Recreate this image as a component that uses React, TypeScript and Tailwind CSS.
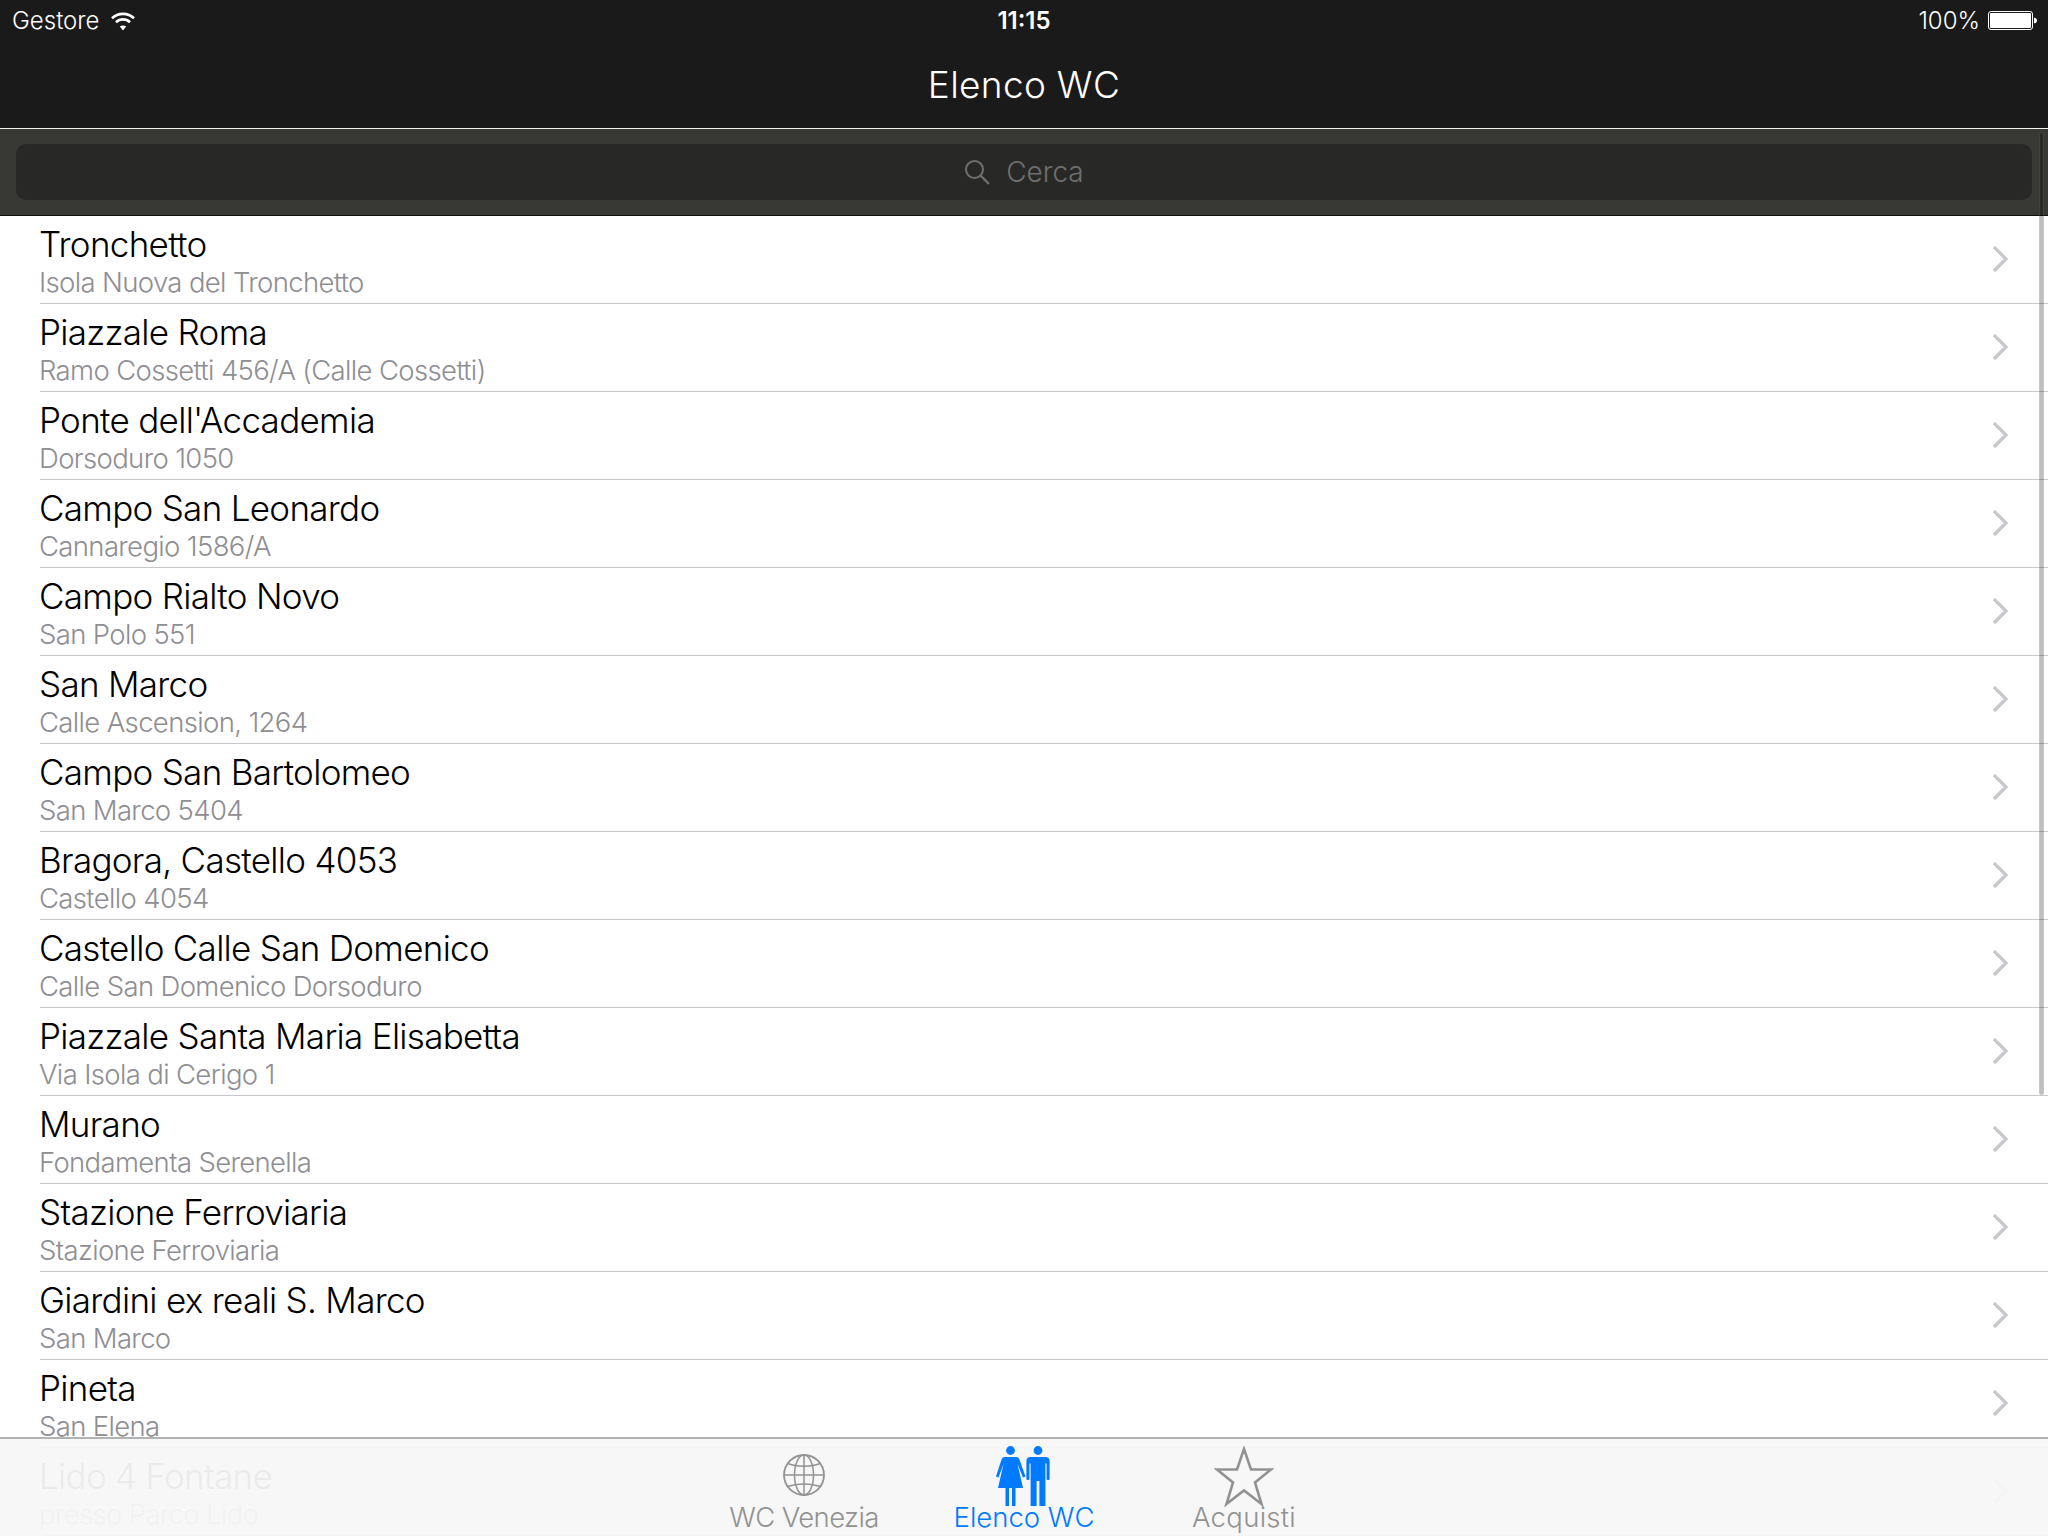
const rows: [string, string][] = [
  ["Tronchetto", "Isola Nuova del Tronchetto"],
  ["Piazzale Roma", "Ramo Cossetti 456/A (Calle Cossetti)"],
  ["Ponte dell'Accademia", "Dorsoduro 1050"],
  ["Campo San Leonardo", "Cannaregio 1586/A"],
  ["Campo Rialto Novo", "San Polo 551"],
  ["San Marco", "Calle Ascension, 1264"],
  ["Campo San Bartolomeo", "San Marco 5404"],
  ["Bragora, Castello 4053", "Castello 4054"],
  ["Castello Calle San Domenico", "Calle San Domenico Dorsoduro"],
  ["Piazzale Santa Maria Elisabetta", "Via Isola di Cerigo 1"],
  ["Murano", "Fondamenta Serenella"],
  ["Stazione Ferroviaria", "Stazione Ferroviaria"],
  ["Giardini ex reali S. Marco", "San Marco"],
  ["Pineta", "San Elena"],
  ["Lido 4 Fontane", "presso Parco Lido"],
];

function Wifi() {
  return (
    <svg width="26" height="20" viewBox="0 0 26 20" fill="none" stroke="white" strokeWidth="2.6">
      <path d="M2 7.2C8 1.4 18 1.4 24 7.2" />
      <path d="M6 11.2C10 7.4 16 7.4 20 11.2" />
      <path d="M13 19.4L9.8 15.6C11.8 14 14.2 14 16.2 15.6Z" fill="white" stroke="none" />
    </svg>
  );
}

function Battery() {
  return (
    <svg width="50" height="20" viewBox="0 0 50 20" fill="none">
      <rect x="0.5" y="0.5" width="44" height="18" rx="2.5" stroke="white" />
      <rect x="2" y="2" width="41" height="15" rx="1" fill="white" />
      <path d="M46 6.5C48 6.8 49 8 49 9.5C49 11 48 12.2 46 12.5Z" fill="white" />
    </svg>
  );
}

function Search() {
  return (
    <svg width="26" height="26" viewBox="0 0 26 26" fill="none" stroke="#6f6f6f" strokeWidth="2">
      <circle cx="10.5" cy="10.5" r="8.5" />
      <path d="M16.5 16.5L25 25" strokeWidth="2.4" />
    </svg>
  );
}

function Chevron() {
  return (
    <svg className="mb-[2px]" width="16" height="28" viewBox="0 0 16 28" fill="none" stroke="#c7c7cc" strokeWidth="3.2">
      <path d="M2 2L14 14L2 26" />
    </svg>
  );
}

function Globe() {
  return (
    <svg className="mb-[12px]" width="42" height="42" viewBox="0 0 42 42" fill="none" stroke="#929292" strokeWidth="1.5">
      <circle cx="21" cy="21" r="20" strokeWidth="1.8" />
      <ellipse cx="21" cy="21" rx="9.5" ry="20" />
      <path d="M21 1V41" />
      <path d="M1.5 21H40.5" />
      <path d="M5 9.5C14 13 28 13 37 9.5" />
      <path d="M5 32.5C14 29 28 29 37 32.5" />
    </svg>
  );
}

function People() {
  return (
    <svg className="mb-[2px]" width="56" height="60" viewBox="0 0 56 60" fill="#007aff">
      <circle cx="14.5" cy="4.5" r="4.4" />
      <path d="M8.5 11H20.5C22 11 22.8 12 23.4 13.5L29.5 30.5L27 31.5L21.5 18L27 42H19.5V60H16V42H13V60H9.5V42H2L7.5 18L2.5 31.5L0 30.5L5.5 13.5C6.2 12 7 11 8.5 11Z" />
      <circle cx="42" cy="4.5" r="4.4" />
      <path d="M34.5 11H49.5C52 11 53.6 12.6 53.6 15V33C53.6 34.4 50.6 34.4 50.6 33V17.5H49.4V60H43.4V35H40.6V60H34.6V17.5H33.4V33C33.4 34.4 30.4 34.4 30.4 33V15C30.4 12.6 32 11 34.5 11Z" />
    </svg>
  );
}

function Star() {
  return (
    <svg width="60" height="62" viewBox="0 0 60 62" fill="none" stroke="#929292" strokeWidth="2.6">
      <path d="M30 3L37 23.5H57L41 36.5L47.5 58L30 44.5L12.5 58L19 36.5L3 23.5H23Z" />
    </svg>
  );
}

function Tab({ label, labelClass, children }: { label: string; labelClass: string; children: React.ReactNode }) {
  return (
    <div className="w-[220px] h-full flex flex-col items-center">
      <div className="h-[69px] flex items-end justify-center">{children}</div>
      <div className={`text-[27.5px] leading-[30px] mt-[-6px] font-light whitespace-nowrap ${labelClass}`}>{label}</div>
    </div>
  );
}

export default function App() {
  return (
    <div className="relative h-[1536px] overflow-hidden bg-white flex flex-col font-['Inter','Liberation_Sans',sans-serif]">
      <header className="h-[129px] shrink-0 bg-[#1a1a1a] border-b border-[#f2f2f2] text-white flex flex-col">
        <div className="h-[42px] pl-3 pr-[10px] flex items-center justify-between relative text-[24px] font-light">
          <div className="flex items-center gap-[11px]">
            <span>Gestore</span>
            <Wifi />
          </div>
          <span className="absolute left-1/2 -translate-x-1/2 font-semibold">11:15</span>
          <div className="flex items-center gap-[8px]">
            <span>100%</span>
            <Battery />
          </div>
        </div>
        <div className="flex-1 flex items-center justify-center text-[37px] tracking-[0.3px] font-light">Elenco WC</div>
      </header>

      <div className="h-[87px] shrink-0 bg-[#383834] border-b border-[#111] pl-4 pr-4 pt-[15px]">
        <div className="h-[56px] rounded-[10px] bg-[#282826] flex items-center justify-center gap-[16px] text-[#6f6f6f] text-[28px] font-light">
          <Search />
          <span>Cerca</span>
        </div>
      </div>

      <div className="flex-1 overflow-hidden">
        {rows.map(([title, sub]) => (
          <div key={title} className="h-[88px] pl-10">
            <div className="h-full border-b border-[#c8c7cc] pr-10 flex items-center justify-between">
              <div className="pt-[3px] ml-[-1px]">
                <div className="text-[35px] leading-[42px] tracking-[-0.7px] font-light text-black whitespace-nowrap">{title}</div>
                <div className="mt-[1px] text-[27.5px] leading-[33px] tracking-[-0.65px] font-light text-[#8e8e93] whitespace-nowrap">{sub}</div>
              </div>
              <Chevron />
            </div>
          </div>
        ))}
      </div>

      <div className="absolute right-[4px] top-[132px] w-[5px] h-[963px] rounded-full bg-black/25 border border-white/10" />

      <nav className="absolute bottom-0 left-0 right-0 h-[99px] bg-[#f7f7f7]/95 border-t-2 border-[#b2b2b2] flex justify-center">
        <Tab label="WC Venezia" labelClass="text-[#929292] tracking-[-0.6px]"><Globe /></Tab>
        <Tab label="Elenco WC" labelClass="text-[#007aff]"><People /></Tab>
        <Tab label="Acquisti" labelClass="text-[#929292] tracking-[0.3px]"><Star /></Tab>
      </nav>
    </div>
  );
}
